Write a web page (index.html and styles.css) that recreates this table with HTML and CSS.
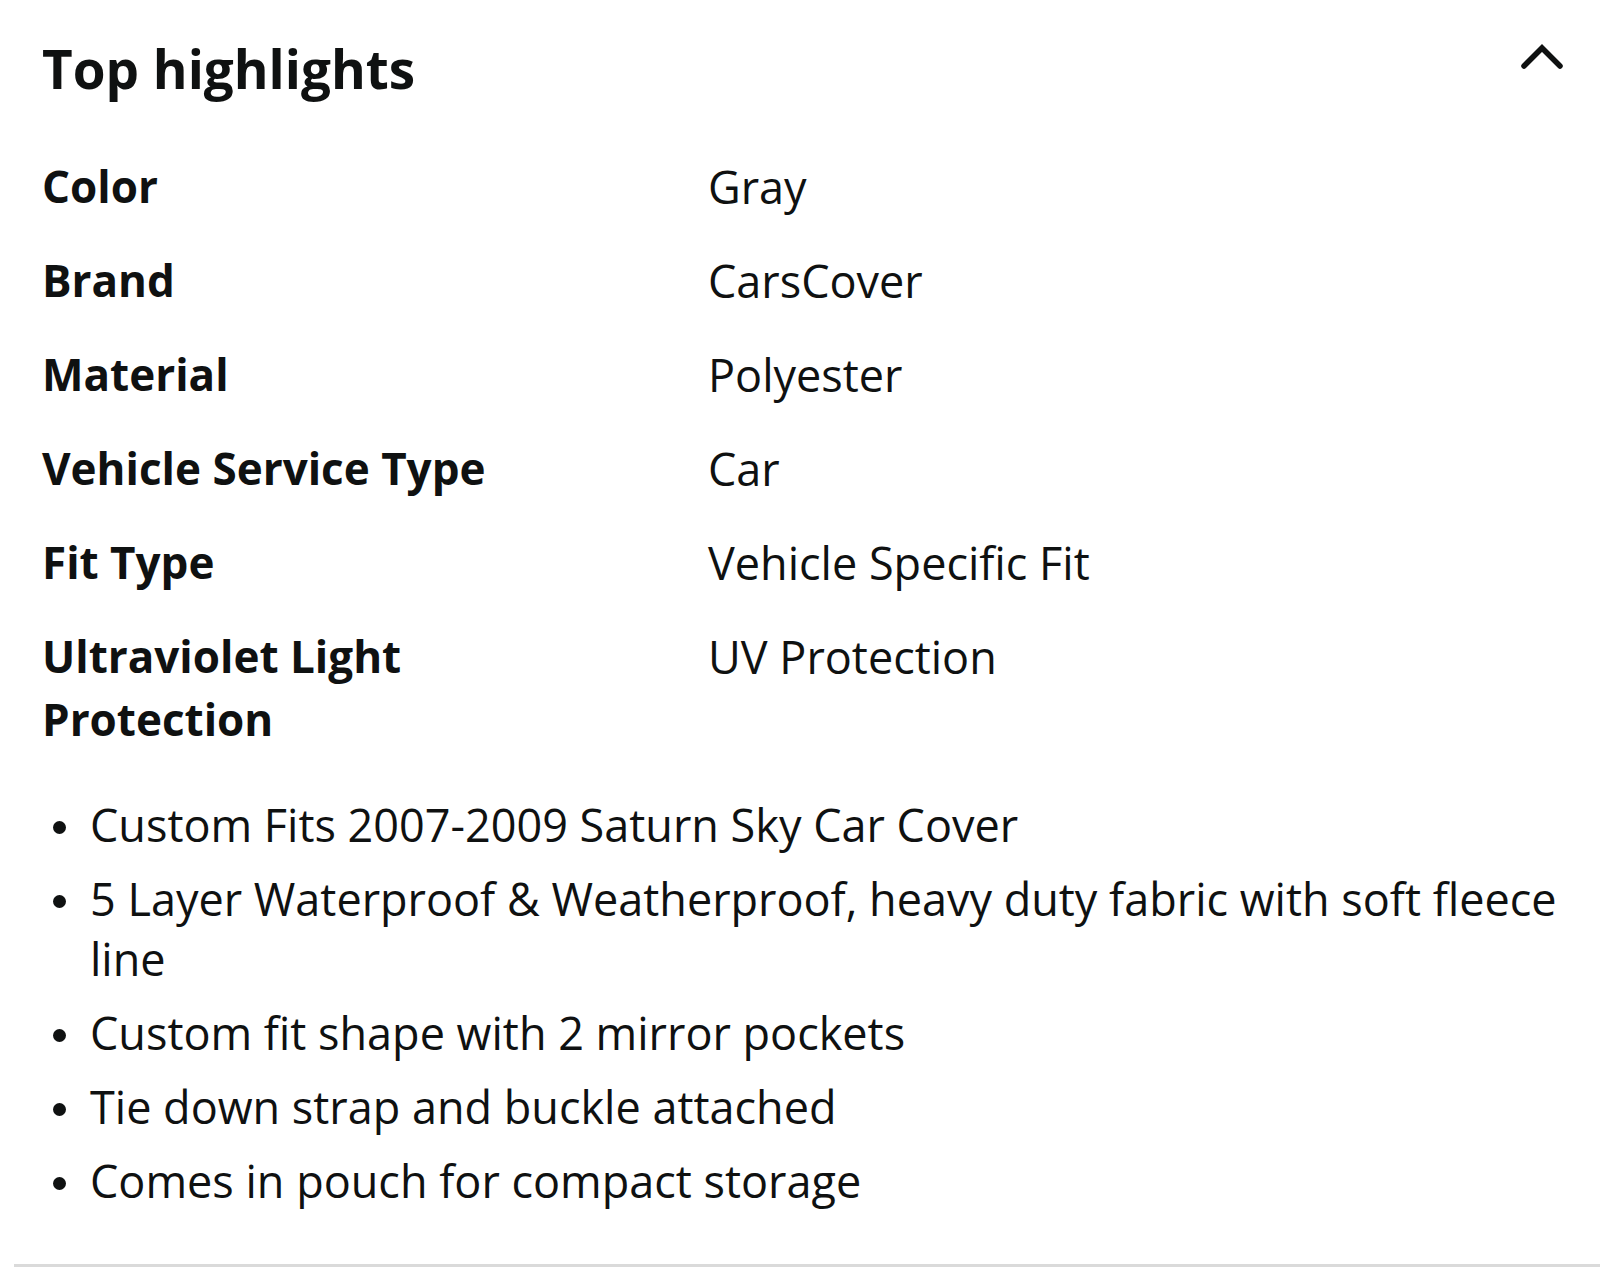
FILE: index.html
```html
<!DOCTYPE html>
<html lang="en">
<head>
<meta charset="utf-8">
<title>Top highlights</title>
<link rel="stylesheet" href="styles.css">
</head>
<body>
<section class="panel">
  <div class="content">
    <header class="head">
      <h2 class="title">Top highlights</h2>
      <svg class="chevron" width="44" height="32" viewBox="0 0 44 32" aria-hidden="true">
        <polyline points="5,26 23,8 41,26" fill="none" stroke="#0f1111" stroke-width="5.5" stroke-linecap="round" stroke-linejoin="miter"/>
      </svg>
    </header>
    <div class="specs">
      <div class="label">Color</div><div class="value">Gray</div>
      <div class="label">Brand</div><div class="value">CarsCover</div>
      <div class="label">Material</div><div class="value">Polyester</div>
      <div class="label">Vehicle Service Type</div><div class="value">Car</div>
      <div class="label">Fit Type</div><div class="value">Vehicle Specific Fit</div>
      <div class="label">Ultraviolet Light Protection</div><div class="value">UV Protection</div>
    </div>
    <ul class="bullets">
      <li>Custom Fits 2007-2009 Saturn Sky Car Cover</li>
      <li>5 Layer Waterproof &amp; Weatherproof, heavy duty fabric with soft fleece line</li>
      <li>Custom fit shape with 2 mirror pockets</li>
      <li>Tie down strap and buckle attached</li>
      <li>Comes in pouch for compact storage</li>
    </ul>
  </div>
  <div class="divider"></div>
</section>
</body>
</html>
```
FILE: styles.css
```css
html, body {
  margin: 0;
  padding: 0;
  background: #ffffff;
}

body {
  font-family: "Open Sans", "Noto Sans", sans-serif;
  color: #0f1111;
}

.panel {
  display: flex;
  flex-direction: column;
}

.content {
  padding: 33px 40px 0 42px;
}

.head {
  display: flex;
  justify-content: space-between;
  align-items: flex-start;
}

.title {
  margin: 0;
  font-size: 53px;
  font-weight: 700;
  line-height: 72px;
}

.chevron {
  display: block;
  margin-top: 7px;
  margin-right: -3px;
}

.specs {
  margin-top: 50px;
  display: grid;
  grid-template-columns: 666px 1fr;
  row-gap: 31px;
}

.label {
  font-size: 44px;
  font-weight: 700;
  line-height: 63px;
  padding-right: 100px;
}

.value {
  font-size: 45px;
  font-weight: 400;
  line-height: 63px;
}

.bullets {
  list-style: none;
  margin: 44px 0 0 0;
  padding: 0;
  display: flex;
  flex-direction: column;
  gap: 14px;
}

.bullets li {
  display: grid;
  grid-template-columns: 48px 1fr;
  align-items: start;
  font-size: 45px;
  line-height: 60px;
}

.bullets li::before {
  content: "";
  width: 13px;
  height: 13px;
  border-radius: 50%;
  background: #0f1111;
  margin: 26px 0 0 11px;
}

.divider {
  margin: 53px 0 0 14px;
  height: 4px;
  background: #dadada;
}
```
